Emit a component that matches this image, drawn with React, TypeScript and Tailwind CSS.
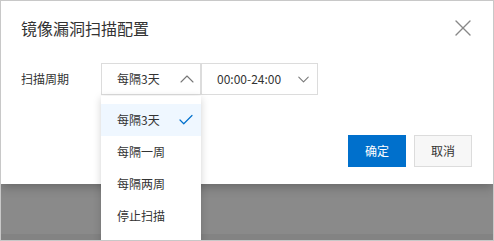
import { Check, ChevronDown, ChevronUp, X } from "lucide-react";

const options = ["每隔3天", "每隔一周", "每隔两周", "停止扫描"];

export default function App() {
  return (
    <div
      className="relative flex h-[241px] w-[494px] flex-col overflow-hidden border border-[#c8c8c8] bg-[#8a8a8a] text-[#333]"
      style={{ fontFamily: '"Noto Sans CJK SC", "Noto Sans", sans-serif' }}
    >
      {/* Dialog */}
      <div className="relative z-10 h-[183px] shrink-0 bg-white shadow-[0_3px_10px_rgba(0,0,0,0.25)]">
        <div className="flex h-[54px] items-center justify-between pl-[20px] pr-[16px]">
          <span className="text-[16px] leading-none">镜像漏洞扫描配置</span>
          <X className="h-[28px] w-[28px] text-[#888]" strokeWidth={1.2} />
        </div>

        <div className="mt-[8px] flex items-center">
          <span className="w-[100px] pl-[20px] text-[12px]">扫描周期</span>
          <div className="flex h-[32px] w-[100px] items-center justify-between border border-[#dcdcdc] pl-[15px] pr-[1px] text-[12px]">
            <span>每隔3天</span>
            <ChevronUp className="h-[24px] w-[24px] text-[#777]" strokeWidth={1.1} />
          </div>
          <div className="flex h-[32px] w-[117px] items-center justify-between border border-[#dcdcdc] pl-[15px] pr-[4px] text-[12px]">
            <span>00:00-24:00</span>
            <ChevronDown className="h-[19px] w-[19px] text-[#777]" strokeWidth={1.3} />
          </div>
        </div>

        <div className="mt-[40px] flex justify-end gap-[8px] pr-[21px]">
          <button className="h-[32px] w-[58px] bg-[#0070cc] text-[12px] text-white">确定</button>
          <button className="h-[32px] w-[58px] border border-[#dcdcdc] bg-[#f7f7f7] text-[12px] text-[#333]">
            取消
          </button>
        </div>
      </div>

      {/* Mask */}
      <div className="flex flex-1 flex-col">
        <div className="flex-1" />
        <div className="h-[6px] bg-[#838383]" />
      </div>

      {/* Dropdown menu */}
      <div className="absolute left-[100px] top-[95px] z-20 h-[160px] w-[100px] bg-white pt-[8px] shadow-[0_2px_8px_rgba(0,0,0,0.18)]">
        {options.map((opt, i) => (
          <div
            key={opt}
            className={
              i === 0
                ? "flex h-[32px] items-center justify-between bg-[#eff7ff] pl-[16px] pr-[6px] text-[12px]"
                : "flex h-[32px] items-center pl-[16px] text-[12px]"
            }
          >
            <span>{opt}</span>
            {i === 0 && <Check className="h-[18px] w-[18px] text-[#0070cc]" strokeWidth={1.6} />}
          </div>
        ))}
      </div>
    </div>
  );
}
